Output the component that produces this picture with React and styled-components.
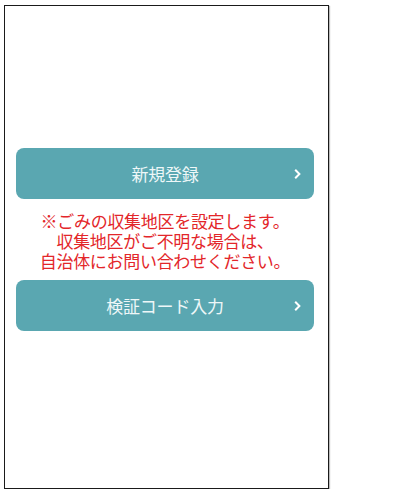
import React from "react";
import styled, { createGlobalStyle } from "styled-components";

const GlobalStyle = createGlobalStyle`
  body {
    margin: 0;
    background: #fff;
    font-family: "Noto Sans CJK JP", "Noto Sans", sans-serif;
  }
`;

const Frame = styled.div`
  box-sizing: border-box;
  width: 325px;
  height: 484px;
  margin: 5px 0 0 4px;
  border: 1px solid #1a1a1a;
  box-shadow: 1px 1px 1px #bdbdbd;
  padding: 142px 14px 0 11px;
  display: flex;
  flex-direction: column;
`;

const MenuButton = styled.button`
  position: relative;
  box-sizing: border-box;
  width: 100%;
  height: 51px;
  border: none;
  border-radius: 8px;
  background: #5aa7b1;
  color: #eef7f8;
  font-family: inherit;
  font-size: 17px;
  letter-spacing: -0.2px;
  display: flex;
  align-items: center;
  justify-content: center;
  padding: 0;
  cursor: pointer;

  svg {
    position: absolute;
    right: 13px;
    top: 50%;
    transform: translateY(-50%);
  }
`;

const Notice = styled.p`
  margin: 12px 0 9px;
  color: #e3262a;
  font-size: 17px;
  line-height: 20px;
  letter-spacing: -0.3px;
  text-align: center;
`;

const Chevron = () => (
  <svg width="7" height="11" viewBox="0 0 7 11">
    <path d="M1.2 1.2 L5.4 5.5 L1.2 9.8" fill="none" stroke="#fff" strokeWidth="2" />
  </svg>
);

export default function App() {
  return (
    <>
      <GlobalStyle />
      <Frame>
        <MenuButton>
          新規登録
          <Chevron />
        </MenuButton>
        <Notice>
          ※ごみの収集地区を設定します。
          <br />
          収集地区がご不明な場合は、
          <br />
          自治体にお問い合わせください。
        </Notice>
        <MenuButton>
          検証コード入力
          <Chevron />
        </MenuButton>
      </Frame>
    </>
  );
}
